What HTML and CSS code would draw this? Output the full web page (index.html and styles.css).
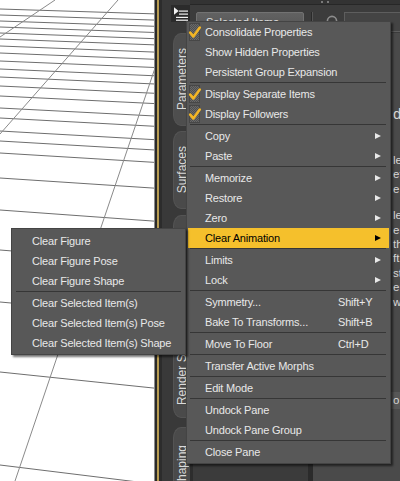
FILE: index.html
```html
<!DOCTYPE html>
<html>
<head>
<meta charset="utf-8">
<title>Parameters pane menu</title>
<link rel="stylesheet" href="styles.css">
</head>
<body>
<div class="app">
  <div class="viewport">
    <svg class="grid" width="154" height="481" viewBox="0 0 154 481">
      <line x1="0" y1="9" x2="155" y2="13.9"/>
      <line x1="0" y1="15" x2="155" y2="20.1"/>
      <line x1="0" y1="21" x2="155" y2="26.3"/>
      <line x1="0" y1="27" x2="155" y2="32.5"/>
      <line x1="0" y1="33" x2="155" y2="38.7"/>
      <line x1="0" y1="39" x2="155" y2="44.9"/>
      <line x1="0" y1="46" x2="155" y2="52.1"/>
      <line x1="0" y1="53" x2="155" y2="59.3"/>
      <line x1="0" y1="61" x2="155" y2="67.5"/>
      <line x1="0" y1="69" x2="155" y2="75.8"/>
      <line x1="0" y1="77" x2="155" y2="84"/>
      <line x1="0" y1="86" x2="155" y2="93.3"/>
      <line x1="0" y1="96" x2="155" y2="103.6"/>
      <line x1="0" y1="108" x2="155" y2="116"/>
      <line x1="0" y1="118" x2="155" y2="126.3"/>
      <line x1="0" y1="131" x2="155" y2="139.7"/>
      <line x1="0" y1="141" x2="155" y2="150"/>
      <line x1="0" y1="153" x2="155" y2="162.4"/>
      <line x1="0" y1="178" x2="155" y2="188.2"/>
      <line x1="0" y1="210" x2="155" y2="221.2"/>
      <line x1="0" y1="250" x2="155" y2="262.4"/>
      <line x1="0" y1="302" x2="155" y2="316"/>
      <line x1="0" y1="372" x2="155" y2="388.2"/>
      <line x1="0" y1="465" x2="155" y2="484.1"/>
      <line class="d" x1="55" y1="0" x2="0" y2="37"/>
      <line class="d" x1="118" y1="0" x2="0" y2="134"/>
      <line class="d" x1="155" y1="68" x2="15" y2="481"/>
    </svg>
  </div>
  <div class="frame"></div>
  <div class="tabstrip">
    <div class="pane-btn">
      <svg width="20" height="17" viewBox="0 0 20 17">
        <path d="M3 2.3 L3 9.7 L7.7 6 Z" fill="#f2f2f2"/>
        <rect x="8" y="5.5" width="9" height="1.2" fill="#f2f2f2"/>
        <rect x="8" y="8.5" width="9" height="1.2" fill="#f2f2f2"/>
        <rect x="5" y="11.8" width="12" height="1.2" fill="#f2f2f2"/>
        <rect x="5" y="14.6" width="12" height="1.2" fill="#f2f2f2"/>
      </svg>
    </div>
    <div class="tab t-params"><span>Parameters</span></div>
    <div class="tab t-surf"><span>Surfaces</span></div>
    <div class="tab t-pose"><span>Posing</span></div>
    <div class="tab t-render"><span>Render Settings</span></div>
    <div class="tab t-shape"><span>Shaping</span></div>
  </div>
  <div class="pane">
    <div class="pane-head"><span class="grip"></span></div>
    <div class="toolbar">
      <div class="selector">Selected Items</div>
      <div class="tb-sep"></div>
      <svg class="search" width="12" height="12" viewBox="0 0 12 12"><circle cx="6" cy="6" r="4.6"/></svg>
      <div class="filter"></div>
    </div>
    <div class="pane-body">
      <div class="list"></div>
      <div class="split"></div>
      <div class="desc">
        <div class="dh">d</div>
        <div class="dp">
          <div>lements</div>
          <div>etting</div>
          <div>e.</div>
        </div>
        <div class="dp dp2">
          <div>lect</div>
          <div>ers</div>
          <div>the</div>
          <div>ft</div>
          <div>st</div>
          <div>ers</div>
          <div>with</div>
        </div>
        <div class="preset">o:</div>
      </div>
    </div>
  </div>

  <div class="menu main">
    <div class="mi"><span class="slot on"><svg width="12" height="18" viewBox="0 0 12 18"><path d="M1.2 9.6 L4.3 13.4 L10.8 4.6"/></svg></span><span class="lbl">Consolidate Properties</span></div>
    <div class="mi"><span class="slot"></span><span class="lbl">Show Hidden Properties</span></div>
    <div class="mi"><span class="slot"></span><span class="lbl">Persistent Group Expansion</span></div>
    <div class="sep"></div>
    <div class="mi"><span class="slot on"><svg width="12" height="18" viewBox="0 0 12 18"><path d="M1.2 9.6 L4.3 13.4 L10.8 4.6"/></svg></span><span class="lbl">Display Separate Items</span></div>
    <div class="mi"><span class="slot on"><svg width="12" height="18" viewBox="0 0 12 18"><path d="M1.2 9.6 L4.3 13.4 L10.8 4.6"/></svg></span><span class="lbl">Display Followers</span></div>
    <div class="sep"></div>
    <div class="mi"><span class="slot"></span><span class="lbl">Copy</span><span class="arr"></span></div>
    <div class="mi"><span class="slot"></span><span class="lbl">Paste</span><span class="arr"></span></div>
    <div class="sep"></div>
    <div class="mi"><span class="slot"></span><span class="lbl">Memorize</span><span class="arr"></span></div>
    <div class="mi"><span class="slot"></span><span class="lbl">Restore</span><span class="arr"></span></div>
    <div class="mi"><span class="slot"></span><span class="lbl">Zero</span><span class="arr"></span></div>
    <div class="mi hl"><span class="slot"></span><span class="lbl">Clear Animation</span><span class="arr"></span></div>
    <div class="sep"></div>
    <div class="mi"><span class="slot"></span><span class="lbl">Limits</span><span class="arr"></span></div>
    <div class="mi"><span class="slot"></span><span class="lbl">Lock</span><span class="arr"></span></div>
    <div class="sep"></div>
    <div class="mi"><span class="slot"></span><span class="lbl">Symmetry...</span><span class="key">Shift+Y</span></div>
    <div class="mi"><span class="slot"></span><span class="lbl">Bake To Transforms...</span><span class="key">Shift+B</span></div>
    <div class="sep"></div>
    <div class="mi"><span class="slot"></span><span class="lbl">Move To Floor</span><span class="key">Ctrl+D</span></div>
    <div class="sep"></div>
    <div class="mi"><span class="slot"></span><span class="lbl">Transfer Active Morphs</span></div>
    <div class="sep"></div>
    <div class="mi"><span class="slot"></span><span class="lbl">Edit Mode</span></div>
    <div class="sep"></div>
    <div class="mi"><span class="slot"></span><span class="lbl">Undock Pane</span></div>
    <div class="mi"><span class="slot"></span><span class="lbl">Undock Pane Group</span></div>
    <div class="sep"></div>
    <div class="mi"><span class="slot"></span><span class="lbl">Close Pane</span></div>
  </div>

  <div class="menu sub">
    <div class="mi">Clear Figure</div>
    <div class="mi">Clear Figure Pose</div>
    <div class="mi">Clear Figure Shape</div>
    <div class="sep"></div>
    <div class="mi">Clear Selected Item(s)</div>
    <div class="mi">Clear Selected Item(s) Pose</div>
    <div class="mi">Clear Selected Item(s) Shape</div>
  </div>
</div>
</body>
</html>
```

FILE: styles.css
```css
* { box-sizing: border-box; }
html, body { margin: 0; padding: 0; background: #3a3a3a; }
body { font-family: "Liberation Sans", Arial, sans-serif; font-size: 11px; }

.app {
  position: relative;
  width: 400px;
  height: 481px;
  overflow: hidden;
  display: flex;
}

/* 3D viewport */
.viewport {
  width: 155px;
  flex: none;
  background: #ffffff;
  border-right: 1px solid #8c8c8c;
  overflow: hidden;
}
.grid { display: block; }
.grid line { stroke: #6e6e6e; stroke-width: 1; }
.grid line.d { stroke: #8a8a8a; }

.frame {
  width: 7px;
  flex: none;
  background: linear-gradient(to right, #2a2a2a 0 2px, #b89c52 2px 4px, #2c2c2c 4px 7px);
}

/* vertical tab strip */
.tabstrip {
  width: 28px;
  flex: none;
  background: #393939;
  display: flex;
  flex-direction: column;
  padding-top: 5px;
}
.pane-btn {
  width: 20px;
  height: 17px;
  margin-left: 9px;
  background: #2b2b2b;
  flex: none;
}
.pane-btn svg { display: block; }
.tab {
  flex: none;
  width: 17px;
  margin-left: 11px;
  background: #4a4a4a;
  border: 1px solid #545454;
  border-right: none;
  border-radius: 8px 0 0 8px / 11px 0 0 11px;
  display: flex;
  align-items: center;
  justify-content: center;
  color: #dadada;
  font-size: 12px;
}
.tab span {
  writing-mode: vertical-rl;
  transform: rotate(180deg);
  white-space: nowrap;
}
.t-params { margin-top: 11px; height: 93px; background: #4e4e4e; }
.t-surf { margin-top: 5px; height: 78px; }
.t-pose { margin-top: 6px; height: 86px; }
.t-render { margin-top: 5px; height: 112px; }
.t-shape { margin-top: 9px; height: 80px; }

/* pane */
.pane {
  flex: 1;
  display: flex;
  flex-direction: column;
  background: #3b3b3b;
}
.pane-head {
  height: 5px;
  background: #333333;
  border-bottom: 1px solid #272727;
}
.grip {
  display: block;
  width: 2px;
  height: 2px;
  margin: 1px 0 0 131px;
  background: #7a7a7a;
  box-shadow: 6px 0 #7a7a7a;
}
.toolbar {
  height: 28px;
  flex: none;
  display: flex;
  align-items: flex-start;
  padding: 7px 0 0 6px;
  background: #3c3c3c;
}
.selector {
  width: 108px;
  height: 20px;
  border: 1px solid #727272;
  border-radius: 2px;
  background: linear-gradient(#626262, #545454);
  color: #e2e2e2;
  padding-left: 9px;
  line-height: 18px;
  white-space: nowrap;
  overflow: hidden;
}
.tb-sep {
  width: 2px;
  height: 20px;
  margin-left: 7px;
  border-left: 1px solid #2a2a2a;
  border-right: 1px solid #555555;
}
.search {
  margin: 3px 0 0 13px;
  flex: none;
}
.search circle { fill: none; stroke: #8c8c8c; stroke-width: 1.6; }
.filter {
  flex: 1;
  height: 20px;
  margin-left: 6px;
  border: 1px solid #5e5e5e;
  border-right: none;
  background: #444444;
}
.pane-body {
  flex: 1;
  display: flex;
}
.list {
  width: 118px;
  flex: none;
  background: #3b3b3b;
  border-left: 3px solid #2d2d2d;
}
.split {
  width: 5px;
  flex: none;
  background: #2b2b2b;
}
.desc {
  flex: 1;
  background: #4a4a4a;
  color: #d8d8d8;
  padding-top: 72px;
  padding-left: 80px;
  white-space: nowrap;
  overflow: hidden;
}
.dh { font-size: 15px; line-height: 18px; }
.dp { margin-top: 30px; font-size: 11.5px; line-height: 14.4px; }
.dp2 { margin-top: 12px; }
.preset {
  margin-top: 83px;
  margin-left: -6px;
  height: 17px;
  padding-left: 6px;
  background: #575757;
  line-height: 17px;
  font-size: 11.5px;
}

/* menus */
.menu {
  position: absolute;
  background: #585858;
  border: 1px solid #444444;
  box-shadow: 2px 2px 2px rgba(0, 0, 0, 0.55);
  color: #e8e8e8;
}
.main { left: 186px; top: 21px; width: 205px; padding: 0 0 1px; }
.sub { left: 11px; top: 228px; width: 175px; padding: 2px 0 1px; }

.mi {
  display: flex;
  align-items: center;
  height: 20px;
  margin: 0 1px;
  padding-left: 1px;
  white-space: nowrap;
  letter-spacing: -0.18px;
}
.mi.hl { background: #f5c02c; color: #000; }
.slot { width: 11px; height: 18px; margin-right: 5px; flex: none; position: relative; }
.slot.on {
  background: repeating-conic-gradient(#6a6a6a 0 25%, #4f4f4f 0 50%) 0 0 / 2px 2px;
  border: 1px solid #474747;
}
.slot svg { position: absolute; left: -1px; top: -1px; overflow: visible; }
.slot path { fill: none; stroke: #f2b526; stroke-width: 2.6; stroke-linecap: round; stroke-linejoin: round; }
.lbl { width: 133px; flex: none; }
.arr {
  margin-left: auto;
  margin-right: 8px;
  width: 0;
  height: 0;
  border-left: 6px solid #e8e8e8;
  border-top: 3.5px solid transparent;
  border-bottom: 3.5px solid transparent;
}
.hl .arr { border-left-color: #000; }
.sep { height: 2px; margin: 0 4px 0 3px; border-top: 1px solid #363636; }
.sub .mi { padding-left: 19px; }
.sub .sep { margin: 0 4px; }
```
